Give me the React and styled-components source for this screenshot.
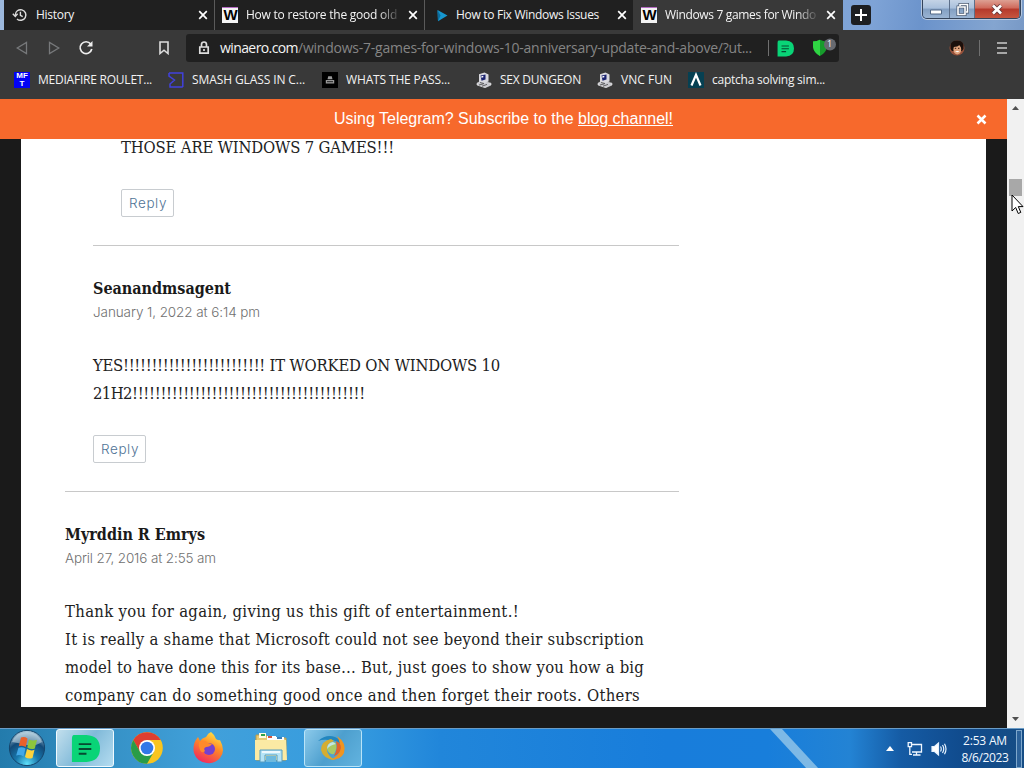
import React, { useLayoutEffect, useRef, useState } from 'react'
import styled, { createGlobalStyle, css } from 'styled-components'

// keeps a run of text at a fixed measure, whichever fallback font is used
const Fit = ({ w, children }) => {
    const ref = useRef(null)
    const [spacing, setSpacing] = useState(0)

    useLayoutEffect(() => {
        const natural = ref.current.getBoundingClientRect().width
        setSpacing((w - natural) / ref.current.textContent.length)
    }, [w])

    return <Run ref={ref} style={{ letterSpacing: spacing }}>{children}</Run>
}

const HistoryIcon = () => (
    <svg width="16" height="16" viewBox="0 0 16 16" fill="none" stroke="#ddd" strokeWidth="1.4">
        <path d="M3.3 8a5.3 5.3 0 1 1 1.7 3.9" />
        <path d="M.8 6.8 3.3 9.4 5.6 6.8M8.4 4.8v3.5l2.3 1.4" />
    </svg>
)

const WinaeroIcon = () => (
    <WinaeroBox>W</WinaeroBox>
)

const MftIcon = () => (
    <MftBox><span>MF</span><span>T</span></MftBox>
)

const PlayIcon = () => (
    <svg width="16" height="16" viewBox="0 0 16 16">
        <path d="M5.5 3 15.5 8.6 6 14.3z" fill="#1697cf" />
        <path d="M5.5 3 8.5 8.5 6 14.3z" fill="#0c6c9d" />
    </svg>
)

const CloseIcon = () => (
    <svg width="10" height="10" viewBox="0 0 10 10" stroke="#fff" strokeWidth="1.7">
        <path d="M1.2 1.2 8.8 8.8M8.8 1.2 1.2 8.8" />
    </svg>
)

const ComputerIcon = () => (
    <svg width="16" height="16" viewBox="0 0 16 16">
        <path d="M1 11.2 5 9l10 2.2v1.8L9 15.700 1 13z" fill="#c9c9cf" stroke="#eee" strokeWidth=".6" />
        <path d="M3 2.2 8.500.6l4 1.800v7L6.500 11.800 3 9.8z" fill="#d9d9df" />
        <path d="M4.500 3.500 9.500 2.600v5L5.500 8.800z" fill="#1b2370" />
        <path d="M5.300 4.200 7.300 3.800v1.500L5.400 5.700z" fill="#fff" />
        <path d="M3 13 7.500 11.800M6 14.200 11 12.400M4 10.500l4 1" stroke="#444" strokeWidth=".8" />
    </svg>
)

const SigmaIcon = () => (
    <svg width="16" height="16" viewBox="0 0 16 16" fill="none" stroke="#4141dd" strokeWidth="1.5">
        <path d="M1 1h13.800v3.500M1 1v3L6.500 8 2 12v3h12.800M14.800 1v14" />
    </svg>
)

const BadgeIcon = () => (
    <svg width="16" height="16" viewBox="0 0 16 16">
        <path d="M0 0h16v16H0z" fill="#000" />
        <path d="M5.500 7.200 6.200 4.300h3.600l.7 2.900M3.800 8h8.400v3.500H3.800z" fill="#999" />
        <path d="M5 9.700h6" stroke="#222" />
    </svg>
)

const PeakIcon = () => (
    <svg width="16" height="16" viewBox="0 0 16 16">
        <path d="M0 0h16v16H0z" fill="#064052" />
        <path d="M3.500 13.500 8 2.800 12.500 13.500" fill="none" stroke="#fff" strokeWidth="2.200" />
    </svg>
)

const NoteIcon = ({ size = 17 }) => (
    <svg width={size} height={size} viewBox="0 0 30 28">
        <path d="M3 0H16Q30 1 30 14 30 27 16 28H1V4Q1 0 3 0Z" fill="#09d477" />
        <path d="M8 9.500h13M8 14.500h13M8 19.500h8" stroke="#064a31" strokeWidth="2" />
    </svg>
)

const ShieldIcon = () => (
    <svg width="26" height="20" viewBox="0 0 26 20">
        <path d="M1 3.500Q5 3.500 8 1.800 11 3.500 15 3.500V9Q14 15 8 18 2 15 1 9Z" fill="#179b2c" />
        <path d="M1 3.500Q5 3.500 8 1.800V18Q2 15 1 9Z" fill="#2fd443" />
        <circle cx="18" cy="6.500" r="6" fill="#676a70" />
    </svg>
)

const Avatar = () => (
    <svg width="16" height="16" viewBox="0 0 16 16">
        <circle cx="8" cy="8" r="7.500" fill="#96513b" />
        <path d="M1.500 9Q0 .5 8 .5 16 .5 14.500 9L13 11H3Z" fill="#1c100c" />
        <ellipse cx="8.300" cy="9.500" rx="3.900" ry="5" fill="#e0a37c" />
        <path d="M4 7Q9 7 11 4.500L12.500 8 11 3 5 3.500Z" fill="#1c100c" />
        <path d="M6 11h4.500Q8.500 13.300 6 11Z" fill="#fff" />
        <path d="M5.800 8.300h1.400M9 8.300h1.400" stroke="#331208" />
    </svg>
)

const WindowsOrb = () => (
    <svg width="38" height="38" viewBox="0 0 38 38">
        <defs>
            <radialGradient id="orb" cx=".5" cy=".95" r=".95">
                <stop offset="0" stopColor="#5ee0fa" />
                <stop offset=".35" stopColor="#1878ad" />
                <stop offset=".68" stopColor="#124a78" />
                <stop offset="1" stopColor="#b4d2e2" />
            </radialGradient>
        </defs>
        <circle cx="19" cy="19" r="17.600" fill="url(#orb)" stroke="#14456c" />
        <path d="M4 13Q8 3 19 3 30 3 34 13 26 18 19 16 11 14 4 13Z" fill="#d3e5ed" opacity=".5" />
        <path d="M13 8.500Q16.500 7.200 19.500 9.500L17.800 18Q13.500 16 10.800 17.200Z" fill="#e9602b" />
        <path d="M21 10.500Q25 12.500 29 10.800L26.800 19.500Q23 21 19.300 18.500Z" fill="#8dc63c" />
        <path d="M10.400 18.700Q14 17.300 17.500 19.500L15.500 27.500Q12 25.200 8.200 26.500Z" fill="#42a8e8" />
        <path d="M19 20Q23 22.300 26.500 20.800L24.500 29Q20.500 30.500 17 28Z" fill="#fdd23c" />
    </svg>
)

const ChromeIcon = () => (
    <svg width="32" height="32" viewBox="0 0 32 32">
        <circle cx="16" cy="16" r="15.800" fill="#f9c51f" />
        <path d="M2.300 8.100A15.800 15.800 0 0 1 29.700 8.100H16L9 20Z" fill="#de3e31" />
        <path d="M2.300 8.100A15.800 15.800 0 0 0 16 31.800L22.800 20 16 23.800 9.200 20Z" fill="#299c49" />
        <circle cx="16" cy="16" r="8" fill="#fff" />
        <circle cx="16" cy="16" r="6.300" fill="#3278e8" />
    </svg>
)

const FirefoxIcon = () => (
    <svg width="32" height="32" viewBox="0 0 32 32">
        <defs>
            <linearGradient id="fox" x1=".8" y1="0" x2=".3" y2="1">
                <stop offset="0" stopColor="#ffec4a" />
                <stop offset=".45" stopColor="#ff8a26" />
                <stop offset="1" stopColor="#f02760" />
            </linearGradient>
        </defs>
        <path d="M18 0Q22 3 23 7 26 9 27 8 33 19 27 26 22 32 14 31 4 30 1 21-1 12 5 5L7 9Q9 6 13 5 15 1 18 0Z" fill="url(#fox)" />
        <circle cx="16" cy="17" r="6" fill="#7540cf" />
        <path d="M6 10Q12 7 15 11L19 12Q17 15 13 15 10 16 12 19 9 22 7 18 5 14 6 10Z" fill="#ff8a2a" />
    </svg>
)

const ExplorerIcon = () => (
    <svg width="34" height="32" viewBox="0 0 34 32">
        <path d="M2 3h10l2 3h18v22H2z" fill="#e7ca72" stroke="#b99b4a" />
        <path d="M5 1h7v5H5z" fill="#fffbe2" />
        <path d="M7 2h4v2H7z" fill="#30a34b" />
        <path d="M13 4h9v5h-9z" fill="#fff" />
        <path d="M14 4h4v2h-4z" fill="#d6543d" />
        <path d="M22 5h8v4h-8z" fill="#fff" />
        <path d="M23 5h5v2h-5z" fill="#3a80b9" />
        <path d="M1 8h31l1 20H1z" fill="#fbeaa4" />
        <path d="M6 30V18h22v12h-5v-7H11v7z" fill="#b6e4f6" stroke="#579cc0" />
        <path d="M12 24h10v6H12z" fill="#6db9de" />
        <path d="M8 20h18" stroke="#fff" strokeWidth="1.500" />
    </svg>
)

const SwirlIcon = () => (
    <svg width="30" height="28" viewBox="0 0 30 28">
        <path d="M0 7Q8 0 17 3 24 6 25 12 18 5 11 6 5 5 0 7Z" fill="#2286bf" />
        <path d="M19 2Q29 9 26 19 23 26 12 26 21 22 22 16 23 9 19 2Z" fill="#ef9420" />
        <path d="M13 5Q3 7 3 16 5 25 17 26 10 22 9 17 8 9 16 7Z" fill="#d5ad32" />
        <path d="M18 7Q25 10 22 17 20 21 16 22 20 15 18 7Z" fill="#e2622b" />
        <path d="M9 15Q10 8 17 8 20 13 16 20 11 21 9 15Z" fill="#a9c965" />
        <path d="M9 15Q9 9 15 8L18 10Q12 11 9 15Z" fill="#c3e4e4" />
    </svg>
)

const NetworkIcon = () => (
    <svg width="16" height="16" viewBox="0 0 16 16" fill="none" stroke="#eef6ff" strokeWidth="1.300">
        <path d="M5 3.500h9.500v7.500H5M9.500 11v2.500M6 14h7.500M1.200 1.600h3.300v4H1.200zM2.800 5.600v7.800H5" />
    </svg>
)

const VolumeIcon = () => (
    <svg width="16" height="16" viewBox="0 0 16 16" fill="none" stroke="#e5f2ff" strokeWidth="1.200">
        <path d="M1 5.500h2.500L7.500 2v12l-4-3.500H1z" fill="#fff" />
        <path d="M9.500 5.500q1.500 2.500 0 5M11.500 4q2.500 4 0 8M13.500 2.800q3 5.200 0 10.400" />
    </svg>
)

const Cursor = () => (
    <CursorSvg width="13" height="21" viewBox="0 0 13 21">
        <path d="M1 1v16l3.700-3.500 2.500 6 2.600-1.100-2.500-5.800H12z" fill="#fff" stroke="#000" />
    </CursorSvg>
)

const tabs = [
    { text: 'History', w: 38, icon: <HistoryIcon /> },
    { text: 'How to restore the good old', w: 151, icon: <WinaeroIcon />, fade: true },
    { text: 'How to Fix Windows Issues', w: 143, icon: <PlayIcon /> },
    { text: 'Windows 7 games for Windo', w: 151, icon: <WinaeroIcon />, fade: true, active: true },
]

const bookmarks = [
    { text: 'MEDIAFIRE ROULET...', w: 114, slot: 154, icon: <MftIcon /> },
    { text: 'SMASH GLASS IN C...', w: 113, slot: 154, icon: <SigmaIcon /> },
    { text: 'WHATS THE PASS...', w: 104, slot: 154, icon: <BadgeIcon /> },
    { text: 'SEX DUNGEON', w: 81, slot: 121, icon: <ComputerIcon /> },
    { text: 'VNC FUN', w: 51, slot: 91, icon: <ComputerIcon /> },
    { text: 'captcha solving sim...', w: 113, slot: 150, icon: <PeakIcon /> },
]

const App = () => {
    return (
        <>
            <GlobalStyle />
            <Desktop>
                <TabBar>
                    {tabs.map((tab, i) => (
                        <Tab key={i} $active={tab.active}>
                            <IconBox>{tab.icon}</IconBox>
                            <TabTitle $fade={tab.fade}><Fit w={tab.w}>{tab.text}</Fit></TabTitle>
                            <CloseIcon />
                        </Tab>
                    ))}
                    <NewTab>
                        <svg width="12" height="12" viewBox="0 0 12 12" stroke="#fff" strokeWidth="2">
                            <path d="M6 0v12M0 6h12" />
                        </svg>
                    </NewTab>
                    <WindowButtons>
                        <WindowButton $w={27}>
                            <svg width="12" height="6" viewBox="0 0 12 6">
                                <path d="M.5 1h11v4H.5z" fill="#fff" stroke="#536986" />
                            </svg>
                        </WindowButton>
                        <WindowButton $w={26}>
                            <svg width="13" height="13" viewBox="0 0 13 13" fill="none">
                                <path d="M4 3V1.500h7.500V9H10M2 4h7v7.500H2z" stroke="#47576f" strokeWidth="3" />
                                <path d="M4 3V1.500h7.500V9H10M2 4h7v7.500H2z" stroke="#fff" strokeWidth="1.600" />
                            </svg>
                        </WindowButton>
                        <WindowButton $w={45} $danger>
                            <svg width="12" height="11" viewBox="0 0 12 11">
                                <path d="M2 1.500 10 9.500M10 1.500 2 9.500" stroke="#663739" strokeWidth="4.500" />
                                <path d="M2 1.500 10 9.500M10 1.500 2 9.500" stroke="#fff" strokeWidth="2.700" />
                            </svg>
                        </WindowButton>
                    </WindowButtons>
                </TabBar>

                <Toolbar>
                    <NavButtons>
                        <svg width="12" height="14" viewBox="0 0 12 14" fill="none" stroke="#77797b" strokeWidth="1.300">
                            <path d="M10.500 1.500v11L1.200 7z" />
                        </svg>
                        <svg width="12" height="14" viewBox="0 0 12 14" fill="none" stroke="#77797b" strokeWidth="1.300">
                            <path d="M1.500 1.500v11L10.800 7z" />
                        </svg>
                        <svg width="16" height="16" viewBox="0 0 16 16" fill="none" stroke="#eee" strokeWidth="1.700">
                            <path d="M12.700 4A5.900 5.900 0 1 0 13.800 9" />
                            <path d="M9 6.500h5.500V1z" fill="#eee" stroke="none" />
                        </svg>
                    </NavButtons>
                    <svg width="12" height="14" viewBox="0 0 12 14" fill="none" stroke="#ddd" strokeWidth="1.600">
                        <path d="M2 1h8v11.500L6 9.200 2 12.500z" />
                    </svg>
                    <AddressBar>
                        <svg width="12" height="14" viewBox="0 0 12 14" fill="none" stroke="#ddd" strokeWidth="1.700">
                            <path d="M3.500 5.500V3.500Q3.500 1 6 1T8.500 3.500v2M1.800 6h8.400v6.200H1.800zM6 8v2" />
                        </svg>
                        <Url>
                            <b><Fit w={78}>winaero.com</Fit></b>
                            <Fit w={454}>/windows-7-games-for-windows-10-anniversary-update-and-above/?ut...</Fit>
                        </Url>
                        <Extensions>
                            <Rule />
                            <NoteIcon />
                            <Shield><ShieldIcon /><Count>1</Count></Shield>
                        </Extensions>
                    </AddressBar>
                    <Account>
                        <Avatar />
                        <Rule />
                        <svg width="10" height="14" viewBox="0 0 10 14" stroke="#ccc" strokeWidth="1.600">
                            <path d="M0 2h10M0 7h10M0 12h10" />
                        </svg>
                    </Account>
                </Toolbar>

                <Bookmarks>
                    {bookmarks.map((b, i) => (
                        <Bookmark key={i} $w={b.slot}>
                            {b.icon}
                            <Fit w={b.w}>{b.text}</Fit>
                        </Bookmark>
                    ))}
                </Bookmarks>

                <Viewport>
                    <Page>
                        <Banner>
                            <p><Fit w={244}>Using Telegram? Subscribe to the </Fit><a><Fit w={95}>blog channel!</Fit></a></p>
                            <svg width="11" height="11" viewBox="0 0 11 11" stroke="#fff" strokeWidth="2.500">
                                <path d="M1.500 1.500 9.500 9.500M9.500 1.500 1.500 9.500" />
                            </svg>
                        </Banner>
                        <Sheet>
                            <Comment $indent={56} $first>
                                <Line><Fit w={273}>THOSE ARE WINDOWS 7 GAMES!!!</Fit></Line>
                                <Reply><Fit w={38}>Reply</Fit></Reply>
                            </Comment>
                            <Comment $indent={28}>
                                <Author><Fit w={138}>Seanandmsagent</Fit></Author>
                                <Posted><Fit w={167}>January 1, 2022 at 6:14 pm</Fit></Posted>
                                <Line>
                                    <Fit w={30}>YES</Fit>
                                    <Fit w={142}>{'!'.repeat(25)}</Fit>
                                    <Fit w={235}> IT WORKED ON WINDOWS 10</Fit>
                                </Line>
                                <Line>
                                    <Fit w={39}>21H2</Fit>
                                    <Fit w={233}>{'!'.repeat(41)}</Fit>
                                </Line>
                                <Reply><Fit w={38}>Reply</Fit></Reply>
                            </Comment>
                            <Comment $indent={0}>
                                <Author><Fit w={140}>Myrddin R Emrys</Fit></Author>
                                <Posted><Fit w={151}>April 27, 2016 at 2:55 am</Fit></Posted>
                                <Line><Fit w={454}>Thank you for again, giving us this gift of entertainment.!</Fit></Line>
                                <Line><Fit w={579}>It is really a shame that Microsoft could not see beyond their subscription</Fit></Line>
                                <Line><Fit w={579}>model to have done this for its base… But, just goes to show you how a big</Fit></Line>
                                <Line><Fit w={575}>company can do something good once and then forget their roots. Others</Fit></Line>
                            </Comment>
                        </Sheet>
                    </Page>
                    <Scrollbar>
                        <svg width="7" height="4" viewBox="0 0 7 4"><path d="M0 4 3.500 0 7 4z" fill="#505050" /></svg>
                        <Thumb />
                        <svg width="7" height="4" viewBox="0 0 7 4"><path d="M0 0 3.500 4 7 0z" fill="#505050" /></svg>
                    </Scrollbar>
                </Viewport>

                <Taskbar>
                    <Streak viewBox="0 0 60 40" width="60" height="40">
                        <path d="M7 0h12L56 40H44z" fill="#8fc3e8" opacity=".85" />
                    </Streak>
                    <Start><WindowsOrb /></Start>
                    <TaskButton $open $bright><NoteIcon size={29} /></TaskButton>
                    <TaskButton><ChromeIcon /></TaskButton>
                    <TaskButton><FirefoxIcon /></TaskButton>
                    <TaskButton><ExplorerIcon /></TaskButton>
                    <TaskButton $open><SwirlIcon /></TaskButton>
                    <Tray>
                        <svg width="8" height="5" viewBox="0 0 8 5"><path d="M0 5 4 0 8 5z" fill="#fff" /></svg>
                        <NetworkIcon />
                        <VolumeIcon />
                        <Clock>
                            <div><Fit w={44}>2:53 AM</Fit></div>
                            <div><Fit w={47}>8/6/2023</Fit></div>
                        </Clock>
                        <ShowDesktop />
                    </Tray>
                </Taskbar>
                <Cursor />
            </Desktop>
        </>
    )
}

export default App

const GlobalStyle = createGlobalStyle`
    * {
        box-sizing: border-box;
    }

    body {
        margin: 0;
        overflow: hidden;
        background: #1a1a1a;
        font-family: "Open Sans", "Noto Sans", sans-serif;
    }

    svg {
        display: block;
        flex: none;
    }

    p {
        margin: 0;
    }
`

const Run = styled.span`
    white-space: pre;
`

const Desktop = styled.div`
    position: relative;
    display: flex;
    flex-direction: column;
    width: 1024px;
    height: 768px;
    overflow: hidden;
`

const TabBar = styled.div`
    display: flex;
    flex: none;
    height: 30px;
    padding-left: 4px;
    background: linear-gradient(100deg, #9cb8dc 0, #7ea3d6 85%, #6b93cb 90%, #84a5d0 97%, #7899c6);
`

const Tab = styled.div`
    display: flex;
    align-items: center;
    width: 210px;
    height: 30px;
    padding: 0 6px 0 8px;
    background: #202020;

    &:nth-child(2),
    &:nth-child(3) {
        padding-left: 7px;
        border-left: 1px solid #5a5a5a;
    }

    &:nth-child(3) {
        width: 209px;
    }

    ${({ $active }) => $active && css`
        padding-right: 7px;
        background: #393939;
    `}
`

const IconBox = styled.div`
    display: flex;
    justify-content: center;
    width: 16px;
    flex: none;
`

const TabTitle = styled.div`
    flex: 1;
    min-width: 0;
    margin: 0 10px 0 8px;
    overflow: hidden;
    color: #f4f4f4;
    font-size: 12px;
    line-height: 18px;

    ${({ $fade }) => $fade && css`
        margin-right: 5px;
        mask-image: linear-gradient(90deg, #000 84%, rgba(0, 0, 0, 0.2) 96%);
    `}
`

const WinaeroBox = styled.div`
    width: 16px;
    height: 16px;
    overflow: hidden;
    background: #f4f4f4;
    border-top: 1px solid #b56bc4;
    color: #000;
    font: bold 15px/14px "Liberation Sans", sans-serif;
    text-align: center;
    text-indent: 1px;
`

const NewTab = styled.div`
    display: flex;
    align-items: center;
    justify-content: center;
    width: 20px;
    height: 20px;
    margin: 5px 0 0 8px;
    border-radius: 3px;
    background: #1d1f22;
`

const WindowButtons = styled.div`
    display: flex;
    width: 99px;
    height: 19px;
    margin-left: 51px;
    overflow: hidden;
    border: 1px solid #34435a;
    border-top: 0;
    border-radius: 0 0 5px 5px;
    box-shadow: 0 0 0 1px #b6c8e0;
`

const WindowButton = styled.div`
    display: flex;
    align-items: center;
    justify-content: center;
    width: ${({ $w }) => $w}px;
    border-right: 1px solid #5c6f8a;
    background: ${({ $danger }) => $danger
        ? 'linear-gradient(#dda093, #cf695a 45%, #b5392b 50%, #c6563f)'
        : 'linear-gradient(#c4d3e6, #a9c0dc 45%, #839fc2 50%, #9ab4d3)'};

    &:first-child {
        padding-top: 5px;
    }
`

const Toolbar = styled.div`
    display: flex;
    align-items: center;
    flex: none;
    height: 36px;
    padding: 0 17px 0 16px;
    background: #393939;
`

const NavButtons = styled.div`
    display: flex;
    align-items: center;
    gap: 20px;
    margin-right: 64px;

    svg:last-child {
        margin-left: -2px;
    }
`

const AddressBar = styled.div`
    display: flex;
    align-items: center;
    width: 653px;
    height: 28px;
    margin-left: 16px;
    padding-left: 12px;
    border-radius: 3px;
    background: #202020;
`

const Url = styled.div`
    width: 532px;
    margin-left: 10px;
    color: #858585;
    font-size: 14px;
    line-height: 20px;
    white-space: nowrap;

    b {
        color: #f4f4f4;
        font-weight: 400;
    }
`

const Rule = styled.div`
    width: 1px;
    height: 16px;
    background: #707070;
`

const Extensions = styled.div`
    display: flex;
    align-items: center;
    margin-left: 16px;

    > svg {
        margin: 0 18px 0 8px;
    }
`

const Shield = styled.div`
    position: relative;
`

const Count = styled.span`
    position: absolute;
    left: 15px;
    top: 0;
    color: #fff;
    font-size: 9px;
    line-height: 12px;
`

const Account = styled.div`
    display: flex;
    align-items: center;
    margin-left: auto;

    ${Rule} {
        margin: 0 17px 0 14px;
    }
`

const Bookmarks = styled.div`
    display: flex;
    align-items: center;
    flex: none;
    height: 33px;
    padding: 0 0 6px 14px;
    background: #393939;
    color: #f2f2f2;
    font-size: 12px;
`

const Bookmark = styled.div`
    display: flex;
    align-items: center;
    gap: 8px;
    width: ${({ $w }) => $w}px;
    flex: none;
`

const MftBox = styled.div`
    display: flex;
    flex-direction: column;
    align-items: center;
    width: 16px;
    height: 16px;
    flex: none;
    background: #0202f5;
    color: #fff;
    font: bold 8px/8px "Liberation Sans", sans-serif;
`

const Viewport = styled.div`
    display: flex;
    height: 629px;
    flex: none;
`

const Page = styled.div`
    display: flex;
    flex-direction: column;
    width: 1007px;
    background: #1a1a1a;
`

const Banner = styled.div`
    display: flex;
    align-items: center;
    flex: none;
    height: 40px;
    padding-right: 20px;
    background: #f7692c;
    color: #fff;
    font: 16px "Liberation Sans", sans-serif;

    p {
        flex: 1;
        padding-left: 31px;
        text-align: center;
    }

    a {
        text-decoration: underline;
    }
`

const Sheet = styled.div`
    width: 965px;
    height: 568px;
    margin-left: 21px;
    padding-left: 44px;
    overflow: hidden;
    background: #fff;
`

const Comment = styled.div`
    width: ${({ $indent }) => 614 - $indent}px;
    margin-left: ${({ $indent }) => $indent}px;
    margin-top: ${({ $first }) => $first ? '-6px' : '28px'};
    padding-top: ${({ $first }) => $first ? 0 : '28px'};
    border-top: ${({ $first }) => $first ? 'none' : '1px solid #c8c8c8'};
`

const Author = styled.div`
    height: 28px;
    color: #1a1a1a;
    font-family: "DejaVu Serif Condensed", "DejaVu Serif", serif;
    font-size: 16px;
    font-stretch: condensed;
    font-weight: 700;
    line-height: 30px;
`

const Posted = styled.div`
    height: 21px;
    margin-bottom: 28px;
    color: #707070;
    font-family: Inter, sans-serif;
    font-size: 13.5px;
    font-weight: 300;
    line-height: 21px;
`

const Line = styled.div`
    height: 28px;
    color: #222;
    font-family: "DejaVu Serif Condensed", "DejaVu Serif", serif;
    font-size: 16.5px;
    font-stretch: condensed;
    line-height: 30px;
    white-space: nowrap;
`

const Reply = styled.div`
    display: flex;
    align-items: center;
    width: 53px;
    height: 28px;
    margin-top: 28px;
    padding-left: 7px;
    border: 1px solid #c8ccd0;
    border-radius: 2px;
    color: #4f7396;
    font-family: Inter, sans-serif;
    font-size: 13.5px;
    font-weight: 300;
`

const Scrollbar = styled.div`
    display: flex;
    flex-direction: column;
    align-items: center;
    width: 17px;
    padding: 7px 0;
    background: #f1f1f1;

    svg:last-child {
        margin-top: auto;
    }
`

const Thumb = styled.div`
    width: 13px;
    height: 17px;
    margin-top: 69px;
    background: #a8a8a8;
`

const Taskbar = styled.div`
    position: relative;
    display: flex;
    flex: none;
    height: 40px;
    border-top: 1px solid #6a9cc6;
    background: linear-gradient(90deg, #237bac 0, #3692c7 11%, #41a0da 20%, #369cdf 34%, #2186da 43%, #187ddb 65%, #187edb 75%, #2383d4 83%, #155ba4 88%, #104b8d 94%, #164d85 100%);
`

const Streak = styled.svg`
    position: absolute;
    left: 763px;
    top: 0;
`

const Start = styled.div`
    width: 56px;
    padding-left: 8px;
`

const TaskButton = styled.div`
    display: flex;
    align-items: center;
    justify-content: center;
    width: 58px;
    height: 38px;
    margin-right: 4px;
    border: 1px solid transparent;
    border-radius: 3px;

    ${({ $open }) => $open && css`
        border-color: #b9e4f8;
        background: linear-gradient(125deg, #8ccaeb, #4d9fce 50%, #62b3df);
    `}

    ${({ $bright }) => $bright && css`
        border-color: #f0faff;
        background: linear-gradient(125deg, #c2dfed, #81bad9 50%, #b4dcf0);
    `}
`

const Tray = styled.div`
    display: flex;
    align-items: center;
    margin-left: auto;

    > svg:first-child {
        margin-right: 13px;
    }

    > svg:nth-child(3) {
        margin-left: 8px;
    }
`

const Clock = styled.div`
    width: 63px;
    margin-left: 6px;
    padding-left: 1px;
    color: #f2f9ff;
    font-size: 12px;
    line-height: 17px;
    text-align: center;
`

const ShowDesktop = styled.div`
    width: 6px;
    height: 38px;
    margin-right: 2px;
    border: 1px solid #7fa8cd;
    background: #2c629a;
`

const CursorSvg = styled.svg`
    position: absolute;
    left: 1011px;
    top: 194px;
`
